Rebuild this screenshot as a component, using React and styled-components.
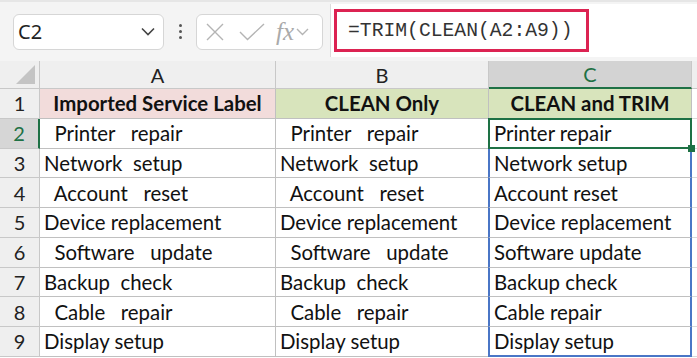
import React from "react";
import styled, { createGlobalStyle } from "styled-components";

const Global = createGlobalStyle`
  html, body { margin: 0; padding: 0; background: #ffffff; }
  body { width: 697px; height: 358px; overflow: hidden; }
  * { box-sizing: border-box; }
`;

const Page = styled.div`
  width: 697px;
  height: 358px;
  overflow: hidden;
  display: flex;
  flex-direction: column;
  background: #ffffff;
`;

const Toolbar = styled.div`
  height: 61px;
  flex: none;
  display: flex;
  align-items: center;
  padding-left: 13px;
  background: #f4f4f4;
  border-top: 2px solid #e6e6e6;
`;

const NameBox = styled.div`
  width: 151px;
  height: 36px;
  display: flex;
  align-items: center;
  justify-content: space-between;
  padding: 0 8px 0 4px;
  background: #ffffff;
  border: 1px solid #d6d6d6;
  border-radius: 6px;
  font-family: "Noto Sans", "Open Sans", sans-serif;
  font-size: 20px;
  color: #222;
`;

const Dots = styled.div`
  width: 32px;
  display: flex;
  flex-direction: column;
  align-items: center;
  gap: 3px;
  & > span {
    width: 3px;
    height: 3px;
    border-radius: 50%;
    background: #555;
  }
`;

const FxBox = styled.div`
  width: 127px;
  height: 36px;
  display: flex;
  align-items: center;
  padding-left: 9px;
  background: #ffffff;
  border: 1px solid #d6d6d6;
  border-radius: 6px;
`;

const FxLabel = styled.span`
  font-family: "Liberation Serif", "DejaVu Serif", serif;
  font-style: italic;
  font-size: 25px;
  color: #aaaaaa;
  margin: 0 2px 0 11px;
  line-height: 1;
`;

const FormulaArea = styled.div`
  flex: 1;
  align-self: stretch;
  margin: 2px 0 4px 7px;
  display: flex;
  align-items: center;
  padding-left: 3px;
  background: #ffffff;
  border-left: 1px solid #dcdcdc;
`;

const FormulaBox = styled.div`
  width: 255px;
  height: 43px;
  display: flex;
  align-items: center;
  padding-left: 11px;
  border: 3px solid #dc2352;
  font-family: "Liberation Mono", "DejaVu Sans Mono", monospace;
  font-size: 19.7px;
  color: #333;
  white-space: pre;
`;

const Grid = styled.div`
  display: grid;
  grid-template-columns: 40px 236px 213px 203px 1fr;
  grid-template-rows: 28px repeat(9, 29.75px);
  font-family: Lato, "Open Sans", sans-serif;
  font-size: 20.4px;
  color: #111;
`;

const Corner = styled.div`
  background: #efefef;
  border-right: 1px solid #c8c8c8;
  border-bottom: 1px solid #c8c8c8;
  display: flex;
  align-items: flex-end;
  justify-content: flex-end;
  padding: 0 4px 4px 0;
`;

const ColHead = styled.div`
  background: ${(p) => (p.$active ? "#d3d3d3" : "#efefef")};
  color: ${(p) => (p.$active ? "#1e7145" : "#222")};
  border-right: 1px solid #c8c8c8;
  border-bottom: ${(p) => (p.$active ? "2px solid #1e7145" : "1px solid #c8c8c8")};
  display: flex;
  align-items: center;
  justify-content: center;
  font-size: 20px;
`;

const Filler = styled.div`
  background: ${(p) => (p.$head ? "#efefef" : "#ffffff")};
  border-bottom: 1px solid ${(p) => (p.$head ? "#c8c8c8" : "#d9d9d9")};
`;

const RowHead = styled.div`
  background: ${(p) => (p.$active ? "#d6d6d6" : "#efefef")};
  color: ${(p) => (p.$active ? "#1e7145" : "#222")};
  border-right: ${(p) => (p.$active ? "2px solid #1e7145" : "1px solid #c8c8c8")};
  border-bottom: 1px solid #c8c8c8;
  display: flex;
  align-items: center;
  justify-content: center;
  font-size: 20px;
`;

const Cell = styled.div`
  position: relative;
  display: flex;
  align-items: center;
  justify-content: ${(p) => (p.$center ? "center" : "flex-start")};
  padding-left: ${(p) => (p.$center ? "0" : "4px")};
  background: ${(p) => p.$bg || "#ffffff"};
  font-weight: ${(p) => (p.$bold ? 700 : 400)};
  white-space: pre;
  overflow: hidden;
  border-right: 1px solid #c0c0c0;
  border-bottom: 1px solid #c0c0c0;
`;

const RangeCell = styled(Cell)`
  overflow: visible;
  z-index: ${(p) => (p.$sel ? 2 : 0)};
  padding-left: 4px;
  border-left: ${(p) => (p.$sel ? "2px solid #1e7145" : "2px solid #4a76c6")};
  border-right: ${(p) => (p.$sel ? "2px solid #1e7145" : "2px solid #4a76c6")};
  border-top: ${(p) => (p.$sel ? "2px solid #1e7145" : "none")};
  border-bottom: ${(p) =>
    p.$sel ? "2px solid #1e7145" : p.$last ? "2px solid #4a76c6" : "1px solid #c0c0c0"};
  margin-left: -1px;
  margin-top: ${(p) => (p.$sel ? "-1px" : "0")};
`;

const FillHandle = styled.span`
  position: absolute;
  right: -5px;
  bottom: -5px;
  width: 7px;
  height: 7px;
  background: #1e7145;
`;

const rows = [
  ["  Printer   repair", "  Printer   repair", "Printer repair"],
  ["Network  setup", "Network  setup", "Network setup"],
  ["  Account   reset", "  Account   reset", "Account reset"],
  ["Device replacement", "Device replacement", "Device replacement"],
  ["  Software   update", "  Software   update", "Software update"],
  ["Backup  check", "Backup  check", "Backup check"],
  ["  Cable   repair", "  Cable   repair", "Cable repair"],
  ["Display setup", "Display setup", "Display setup"],
];

export default function App() {
  return (
    <Page>
      <Global />
      <Toolbar>
        <NameBox>
          <span>C2</span>
          <svg width="14" height="9" viewBox="0 0 14 9">
            <path d="M1 1.5 L7 7.5 L13 1.5" fill="none" stroke="#444" strokeWidth="1.6" />
          </svg>
        </NameBox>
        <Dots>
          <span />
          <span />
          <span />
        </Dots>
        <FxBox>
          <svg width="18" height="18" viewBox="0 0 18 18">
            <path d="M1 1 L17 17 M17 1 L1 17" stroke="#b4b4b4" strokeWidth="1.4" fill="none" />
          </svg>
          <svg width="26" height="18" viewBox="0 0 26 18" style={{ marginLeft: 15 }}>
            <path d="M1 9 L8.5 16.5 L25 1" stroke="#b4b4b4" strokeWidth="1.4" fill="none" />
          </svg>
          <FxLabel>fx</FxLabel>
          <svg width="13" height="8" viewBox="0 0 13 8">
            <path d="M1 1 L6.5 6.5 L12 1" fill="none" stroke="#b4b4b4" strokeWidth="1.4" />
          </svg>
        </FxBox>
        <FormulaArea>
          <FormulaBox>=TRIM(CLEAN(A2:A9))</FormulaBox>
        </FormulaArea>
      </Toolbar>
      <Grid>
        <Corner>
          <svg width="19" height="19" viewBox="0 0 19 19">
            <path d="M19 0 L19 19 L0 19 Z" fill="#c4c4c4" />
          </svg>
        </Corner>
        <ColHead>A</ColHead>
        <ColHead>B</ColHead>
        <ColHead $active>C</ColHead>
        <Filler $head />

        <RowHead>1</RowHead>
        <Cell $center $bold $bg="#f2dcdb">Imported Service Label</Cell>
        <Cell $center $bold $bg="#d8e4bc">CLEAN Only</Cell>
        <Cell $center $bold $bg="#d8e4bc">CLEAN and TRIM</Cell>
        <Filler />

        {rows.map((r, i) => (
          <React.Fragment key={i}>
            <RowHead $active={i === 0}>{i + 2}</RowHead>
            <Cell>{r[0]}</Cell>
            <Cell>{r[1]}</Cell>
            <RangeCell $sel={i === 0} $last={i === rows.length - 1}>
              {r[2]}
              {i === 0 && <FillHandle />}
            </RangeCell>
            <Filler />
          </React.Fragment>
        ))}
      </Grid>
    </Page>
  );
}
